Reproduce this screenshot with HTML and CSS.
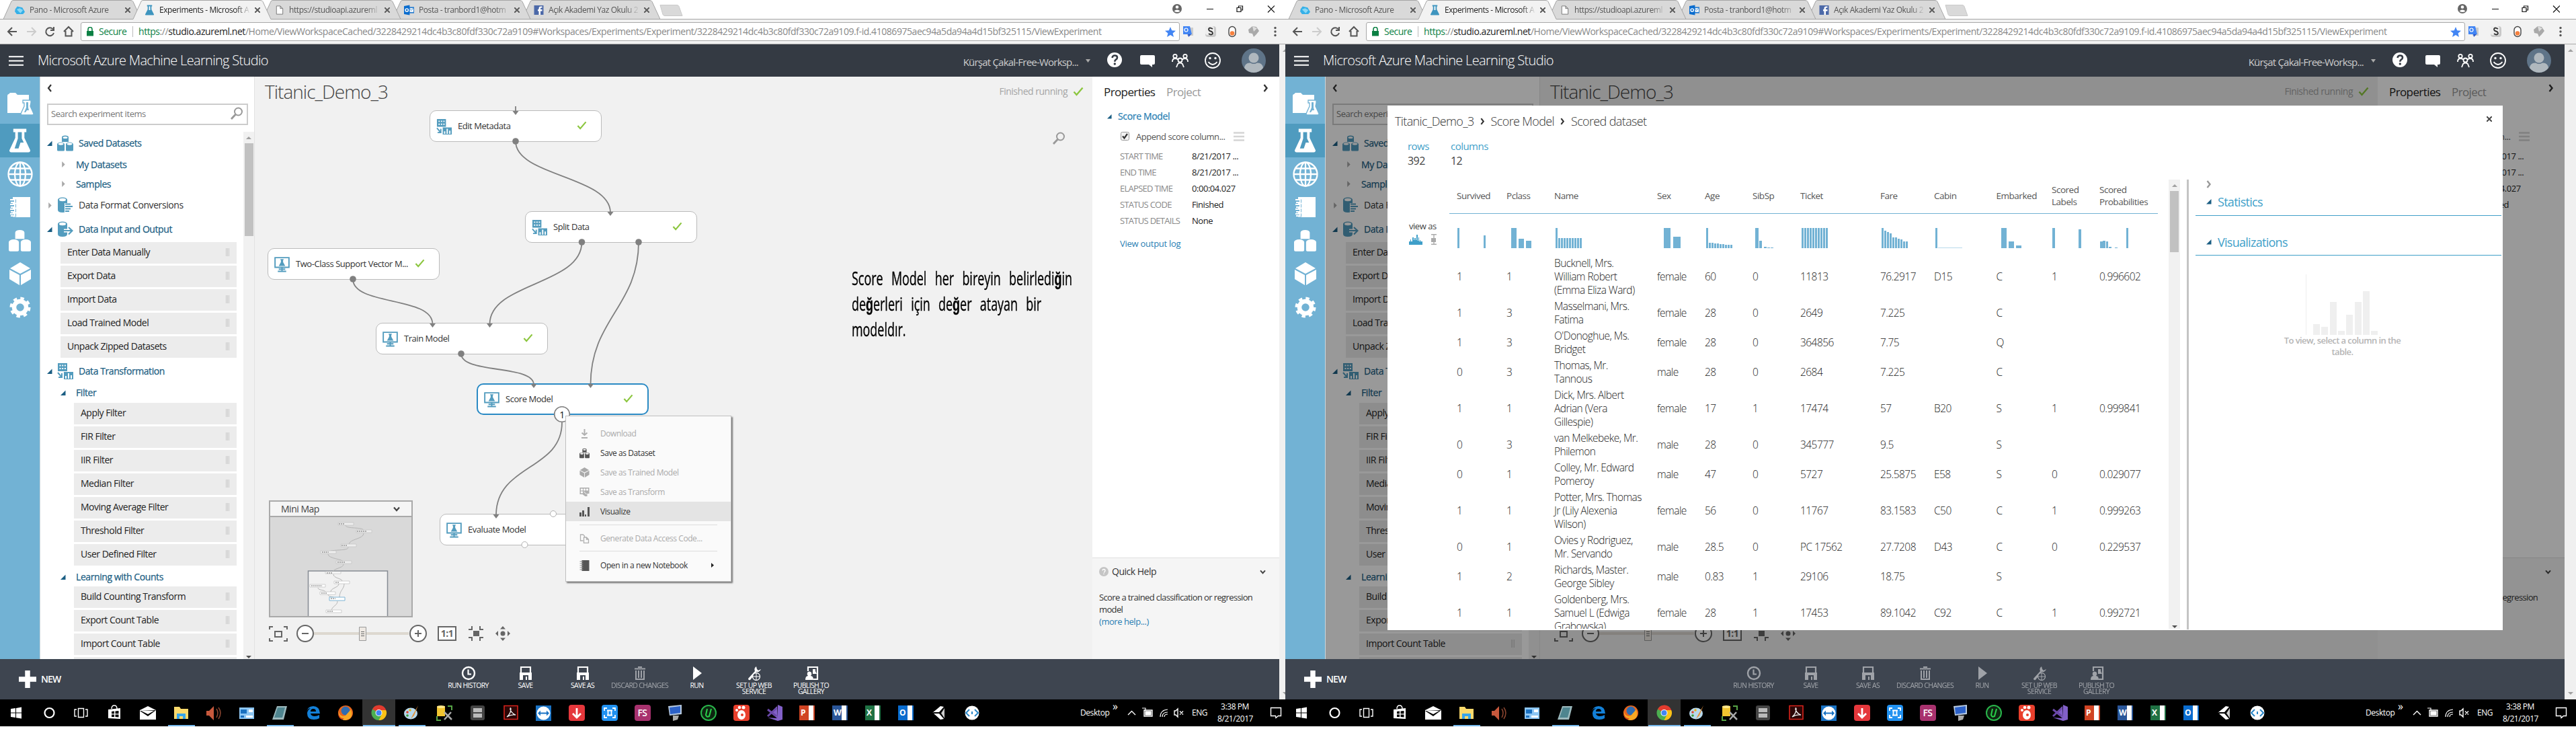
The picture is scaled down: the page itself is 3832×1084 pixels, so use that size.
FILE: index.html
```html
<!DOCTYPE html>
<html lang="en">
<head>
<meta charset="utf-8">
<title>Experiments - Microsoft Azure Machine Learning Studio</title>
<link rel="stylesheet" href="styles.css">
</head>
<body>
<svg class="defs" width="0" height="0">
  <symbol id="check" viewBox="0 0 16 14"><path d="M1.5 7.5 5.5 12 14.5 1.5" fill="none" stroke="#8cc63f" stroke-width="2.4"/></symbol>
  <symbol id="open" viewBox="0 0 8 8"><path d="M7.5 0V7.5H0z" fill="#1b5e83"/></symbol>
  <symbol id="closed" viewBox="0 0 8 10"><path d="M2 0 7 5 2 10z" fill="#a9a9a9"/></symbol>
  <symbol id="data" viewBox="0 0 24 24"><path d="M7 3a5 2.6 0 0 1 10 0v7H7zM0 13.500a5.200 2.800 0 0 1 11 0V22q0 1.500-1.500 1.500h-8Q0 23.500 0 22zM13 13.500a5.200 2.800 0 0 1 11 0V22q0 1.500-1.500 1.500h-8Q13 23.500 13 22z" fill="currentColor"/><g fill="#fff"><ellipse cx="12" cy="3.500" rx="3.500" ry="1.600"/><ellipse cx="5.500" cy="13" rx="3.800" ry="1.700"/><ellipse cx="18.500" cy="13" rx="3.800" ry="1.700"/></g></symbol>
  <symbol id="cylA" viewBox="0 0 24 24"><path d="M1 4a7 3.500 0 0 1 14 0v15q0 4-7 4t-7-4z" fill="#539cbe"/><ellipse cx="8" cy="4" rx="5" ry="2.200" fill="#fff"/><path d="M11 9h12v14H11z" fill="#fff"/><path d="M12 10.500h8M12 14h11M12 17.500h8M12 21h6" stroke="#539cbe" stroke-width="2"/></symbol>
  <symbol id="cylB" viewBox="0 0 24 24"><path d="M1 4a7 3.500 0 0 1 14 0v15q0 4-7 4t-7-4z" fill="#539cbe"/><ellipse cx="8" cy="4" rx="5" ry="2.200" fill="#fff"/><path d="M10 14h12M17 9l5.500 5L17 19.500" stroke="#fff" stroke-width="5" fill="none"/><path d="M10 14h12M17 9l5.500 5L17 19.500" stroke="#539cbe" stroke-width="2.200" fill="none"/></symbol>
  <symbol id="xform" viewBox="0 0 24 24"><path d="M1 0h14v12H1zM10 13h14v11H10z" fill="#539cbe"/><path d="M3.500 2.500h2v2h-2zm3.700 0h2v2h-2zm3.700 0h2v2h-2zM3.500 7h2v2h-2zm3.700 0h2v2h-2zm3.700 0h2v2h-2zM12 19h2v4h-2zm4-4h2v8h-2zm4 3h2v5h-2z" fill="#fff"/><path d="M1 14l6 7M7 15v6H2" stroke="#539cbe" stroke-width="2" fill="none"/></symbol>
  <symbol id="model" viewBox="0 0 24 24"><path d="M1.200 1.200h21.600v15H1.200zM12 16v6M5.500 22.500h13M7 19h10" fill="#fff" stroke="#539cbe" stroke-width="2"/><path d="M9.500 3.500h5v1.200h-.8v3.500l3.300 6H7l3.300-6V4.700h-.8z" fill="#539cbe"/></symbol>
  <symbol id="mag" viewBox="0 0 20 20"><circle cx="12.500" cy="7" r="5.500" fill="none" stroke="#999" stroke-width="2"/><path d="M8.500 11 2 18" stroke="#999" stroke-width="2.800"/></symbol>
  <symbol id="flask" viewBox="0 0 34 36"><path d="M7 0h20v5h-3v9l9 19q0 3-3 3H4q-3 0-3-3l9-19V5H7z" fill="#fff"/><path d="M14 5h6v10l3 6h-5l-3 9H9l5-15z" fill="#4f9bbf"/></symbol>
  <symbol id="cube" viewBox="0 0 32 34"><path d="M16 0 31 9 16 17 1 9zM0 11l15 8v15L0 25zM32 11l-15 8v15l15-9z" fill="currentColor"/></symbol>
  <symbol id="down" viewBox="0 0 10 8"><path d="M1 1.500 5 6l4-4.500" fill="none" stroke="#444" stroke-width="2.200"/></symbol>
  <symbol id="next" viewBox="0 0 8 12"><path d="M1.500 1 5.500 6l-4 5" fill="none" stroke="currentColor" stroke-width="2.400"/></symbol>
</svg>

<main class="pair" id="pair"></main>

<template id="screen">
<section class="screen">
  <div class="tabs">
    <svg class="tabshape" width="1030" height="29" viewBox="0 0 1030 29">
      <g fill="#d9d9d9" stroke="#a5a5a5">
        <path d="M777 28.500 789 2q1-1.500 3-1.500H966q3 0 4 2L982 28.500z"/><path d="M584 28.500 596 2q1-1.500 3-1.500H773q3 0 4 2L789 28.500z"/><path d="M391 28.500 403 2q1-1.500 3-1.500H580q3 0 4 2L596 28.500z"/><path d="M5 28.500 17 2q1-1.500 3-1.500H194q3 0 4 2L210 28.500z"/>
        <path d="M982 7.500h25q2 0 3 2l5 14h-26q-2 0-3-2z" stroke="#c9c9c9"/>
      </g>
      <path d="M0 28.500H198L210 2q1-1.500 3-1.500H387q3 0 4 2L403 28.500H1030V30H0z" fill="#f2f2f2" stroke="#a5a5a5"/>
    </svg>
    <div class="tab"><svg width="16" height="14" viewBox="0 0 16 14"><path d="M4 1l8 2 4 7-3 3.500H3L0 9l1-4z" fill="#35b0e8"/><path d="M3 6l5-2 5 3-4 5z" fill="#8ad8f5"/></svg><span>Pano - Microsoft Azure</span><b></b></div>
    <div class="tab on"><svg width="16" height="16" viewBox="0 0 16 16"><path d="M4 0h8v2h-1v5l4 8q0 1-1 1H2q-1 0-1-1l4-8V2H4z" fill="#3f95bf"/><path d="M7 2h2v6H7z" fill="#fff"/></svg><span>Experiments - Microsoft A</span><b></b></div>
    <div class="tab"><svg width="16" height="16" viewBox="0 0 16 16"><path d="M3.500 1.500h6l4 4v9h-10zM9.500 1.500v4h4" fill="#fff" stroke="#777"/></svg><span>https://studioapi.azureml</span><b></b></div>
    <div class="tab"><svg width="16" height="16" viewBox="0 0 16 16"><path d="M7 3h9v10H7z" fill="#2b7fd0"/><path d="M8 5h7v6H8z" fill="#fff"/><path d="M8 5l3.500 3.500L15 5" stroke="#2b7fd0" fill="none"/><path d="M0 1.500 9 0v16L0 14.500z" fill="#0a6cce"/><circle cx="4.500" cy="8" r="2.300" stroke="#fff" stroke-width="1.500" fill="none"/></svg><span>Posta - tranbord1@hotm</span><b></b></div>
    <div class="tab"><svg width="14" height="14" viewBox="0 0 14 14"><path d="M0 0h14v14H0z" fill="#4c69a8"/><path d="M9.500 14V8.500H12V6H9.500V4.500Q9.500 3.500 11 3.500h1V1.500h-2Q7 1.500 7 4.500V6H5.500v2.500H7V14z" fill="#fff"/></svg><span>Açık Akademi Yaz Okulu 2</span><b></b></div>
    <svg class="winctl" width="170" height="28" viewBox="0 0 170 28"><circle cx="25" cy="13" r="7" fill="#666"/><circle cx="25" cy="10.500" r="2.300" fill="#fff"/><path d="M20.500 16.500q4.500-4 9 0-4 3-9 0" fill="#fff"/><g fill="none" stroke="#111" stroke-width="1.200"><path d="M69 13.500h10M114 11.500h6v6h-6zM116.500 11V9h6v6H120M160 8.500l10 10M170 8.500l-10 10"/></g></svg>
  </div>
  <div class="toolbar">
    <svg class="nav" width="120" height="36" viewBox="0 0 120 36" fill="none" stroke="#555" stroke-width="2"><path d="M25 18H12M18 12l-6 6 6 6"/><path d="M40 18h13M47 12l6 6-6 6" stroke="#ccc"/><path d="M79 14.500A6 6 0 1 0 80 20M80 11v5h-5"/><path d="M95 18l7-7 7 7M97.500 17v7.500h9V17"/></svg>
    <div class="address">
      <svg width="12" height="14" viewBox="0 0 12 14"><path d="M1 6h10v7.500H1z" fill="#0b8043"/><path d="M3 6V3.500a3 3 0 0 1 6 0V6" fill="none" stroke="#0b8043" stroke-width="1.600"/></svg>
      <span class="secure">Secure</span>
      <span class="url"><i>https</i>://<em>studio.azureml.net</em>/Home/ViewWorkspaceCached/3228429214dc4b3c80fdf330c72a9109#Workspaces/Experiments/Experiment/3228429214dc4b3c80fdf330c72a9109.f-id.41086975aec94a5da94a4d15bf325115/ViewExperiment</span>
      <svg width="16" height="15" viewBox="0 0 16 15"><path d="M8 0l2.200 5.300 5.800.4-4.400 3.700L13 15 8 12l-5 3 1.400-5.600L0 5.700l5.800-.4z" fill="#4285f4"/></svg>
    </div>
    <svg class="exts" width="150" height="36" viewBox="0 0 150 36"><path d="M11 12h9v12h-9z" fill="#ccc"/><path d="M5 10h10l3 12H5z" fill="#4285f4"/><path d="M12 22h5l-4 4z" fill="#2a56c6"/><circle cx="9.500" cy="15.500" r="2.500" stroke="#fff" fill="none" stroke-width="1.200"/><rect x="38" y="10" width="16" height="16" rx="4" fill="#c9c9c9"/><rect x="38" y="10" width="13" height="13" rx="3" fill="#eee"/><path d="M49 14q-5-3-6 0 0 3 3 3.500t3 3.500q-2 3-6 0" stroke="#333" stroke-width="1.800" fill="none"/><rect x="73" y="10.500" width="10" height="15" rx="5" fill="#fff" stroke="#444" stroke-width="1.400"/><circle cx="78" cy="20.500" r="3.300" fill="#f5803e"/><path d="M102 15l6-5 6 1 4 6-4 5-4 4-2-5-5-1z" fill="#a9a9a9"/><path d="M108 10l2 8 5-5z" fill="#ddd"/><g fill="#555"><circle cx="142" cy="12.500" r="1.700"/><circle cx="142" cy="18" r="1.700"/><circle cx="142" cy="23.500" r="1.700"/></g></svg>
  </div>
  <div class="page">
    <div class="app">
      <header class="top">
        <svg class="burger" width="22" height="15" viewBox="0 0 22 15"><path d="M0 1.200h22M0 7.500h22M0 13.800h22" stroke="#fff" stroke-width="2"/></svg>
        <h1>Microsoft Azure Machine Learning Studio</h1>
        <span class="ws">Kürşat Çakal-Free-Worksp...</span>
        <svg class="caret" width="7" height="5"><path d="M0 0h7L3.500 5z" fill="#aaa"/></svg>
        <svg width="49" height="48" viewBox="0 0 49 48"><circle cx="24" cy="23" r="11" fill="#fff"/><path d="M20.500 20q.5-3.500 3.800-3.500 3.700 0 3.700 3 0 2-2 3.200-1.700 1-1.700 3" fill="none" stroke="#343a43" stroke-width="2.600"/><circle cx="24.300" cy="29" r="1.700" fill="#343a43"/></svg>
        <svg width="48" height="48" viewBox="0 0 48 48"><path d="M15 16h18q2 0 2 2v10q0 2-2 2h-2v4l-5-4H15q-2 0-2-2V18q0-2 2-2z" fill="#fff"/></svg>
        <svg width="49" height="48" viewBox="0 0 49 48" fill="none" stroke="#fff" stroke-width="1.800"><circle cx="17" cy="17.500" r="2.700"/><circle cx="32" cy="17.500" r="2.700"/><circle cx="24.500" cy="23.500" r="3"/><path d="M13 26q0-5 4-5t4 2M36 26q0-5-4-5t-4 2M19 34l2-5q3.500-3 7 0l2 5"/></svg>
        <svg width="48" height="48" viewBox="0 0 48 48" fill="none" stroke="#fff" stroke-width="1.800"><circle cx="24" cy="24" r="11"/><path d="M17.500 26q6.500 8 13 0"/><g fill="#fff" stroke="none"><circle cx="20" cy="20.500" r="1.700"/><circle cx="28" cy="20.500" r="1.700"/></g></svg>
        <svg width="75" height="48" viewBox="0 0 75 48"><circle cx="37" cy="24" r="18" fill="#5f7488"/><circle cx="37" cy="20" r="7.500" fill="#b0b8be"/><path d="M23 35q1-8 9-7.500 5 3 10 0 8-.5 9 7.500-5.500 7-14 7t-14-7" fill="#b0b8be"/></svg>
      </header>
      <div class="work">
        <nav class="rail">
          <svg class="r1" width="60" height="70" viewBox="0 0 60 70"><path d="M11 29q0-3 2-3l2-2h8l3 3h17v27H11z" fill="#fff"/><path d="M34 35h12v4l-1 5 5 11q0 2-2 2H33q-2 0-2-2l5-11v-5h-2z" fill="#fff" stroke="#72b2d4" stroke-width="1.300"/><path d="M39 38h3v8l1 4h-3l-2 3h-2l3-7z" fill="#72b2d4"/></svg>
          <span class="slot sel"><svg width="33" height="36"><use href="#flask"/></svg></span>
          <span class="slot"><svg width="40" height="40" viewBox="0 0 40 40" fill="none" stroke="#fff" stroke-width="2.300"><circle cx="20" cy="20" r="17.500"/><ellipse cx="20" cy="20" rx="8" ry="17.500"/><path d="M20 2v36M2 20h36M5 11.500h30M5 28.500h30"/></svg></span>
          <span class="slot"><svg width="32" height="32" viewBox="0 0 32 32"><path d="M5 1h26v30H5z" fill="#fff"/><g fill="none" stroke="#72b2d4" stroke-width="5"><path d="M0 7h10M0 14h10M0 21h10M0 28h10"/></g><g fill="none" stroke="#fff" stroke-width="2"><path d="M1 5h7v4H2M1 12h7v4H2M1 19h7v4H2M1 26h7v3H2"/></g></svg></span>
          <span class="slot ds"><svg width="33" height="36"><use href="#data"/></svg></span>
          <span class="slot"><svg width="32" height="34"><use href="#cube"/></svg></span>
          <span class="slot"><svg width="32" height="32" viewBox="0 0 32 32"><circle cx="16" cy="16" r="9" fill="none" stroke="#fff" stroke-width="6.500"/><circle cx="16" cy="16" r="13" fill="none" stroke="#fff" stroke-width="5" stroke-dasharray="5.200 5"/></svg></span>
        </nav>
        <aside class="palette">
          <svg class="back" width="8" height="12" viewBox="0 0 8 12"><path d="M6 1 2 6l4 5" fill="none" stroke="#333" stroke-width="2.200"/></svg>
          <div class="search"><span>Search experiment items</span><svg width="20" height="20"><use href="#mag"/></svg></div>
          <div class="treewrap">
            <div class="tree">
              <div class="g h34"><svg class="t"><use href="#open"/></svg><svg class="i"><use href="#data"/></svg>Saved Datasets</div>
              <div class="g s h29"><svg class="t"><use href="#closed"/></svg>My Datasets</div>
              <div class="g s h29"><svg class="t"><use href="#closed"/></svg>Samples</div>
              <div class="g n h34"><svg class="t"><use href="#closed"/></svg><svg class="i"><use href="#cylA"/></svg>Data Format Conversions</div>
              <div class="g h38"><svg class="t"><use href="#open"/></svg><svg class="i"><use href="#cylB"/></svg>Data Input and Output</div>
              <div class="it">Enter Data Manually</div><div class="it">Export Data</div><div class="it">Import Data</div><div class="it">Load Trained Model</div><div class="it">Unpack Zipped Datasets</div>
              <div class="g h34"><svg class="t"><use href="#open"/></svg><svg class="i"><use href="#xform"/></svg>Data Transformation</div>
              <div class="g s h30"><svg class="t"><use href="#open"/></svg>Filter</div>
              <div class="it d">Apply Filter</div><div class="it d">FIR Filter</div><div class="it d">IIR Filter</div><div class="it d">Median Filter</div><div class="it d">Moving Average Filter</div><div class="it d">Threshold Filter</div><div class="it d">User Defined Filter</div>
              <div class="g s h28"><svg class="t"><use href="#open"/></svg>Learning with Counts</div>
              <div class="it d">Build Counting Transform</div><div class="it d">Export Count Table</div><div class="it d">Import Count Table</div><div class="it d"></div>
            </div>
            <div class="vbar"><i class="up"></i><u></u><i class="dn"></i></div>
          </div>
        </aside>
        <div class="canvas">
          <div class="chead"><h2>Titanic_Demo_3</h2><span>Finished running</span><svg width="16" height="14"><use href="#check"/></svg></div>
          <svg class="find" width="20" height="20"><use href="#mag"/></svg>
          <div class="node" style="left:260px;top:50px"><svg class="ni"><use href="#xform"/></svg><span>Edit Metadata</span><svg class="ok"><use href="#check"/></svg></div>
          <div class="node" style="left:402px;top:200px"><svg class="ni"><use href="#xform"/></svg><span>Split Data</span><svg class="ok"><use href="#check"/></svg></div>
          <div class="node" style="left:19px;top:255px"><svg class="ni"><use href="#model"/></svg><span>Two-Class Support Vector M...</span><svg class="ok"><use href="#check"/></svg></div>
          <div class="node" style="left:180px;top:366px"><svg class="ni"><use href="#model"/></svg><span>Train Model</span><svg class="ok"><use href="#check"/></svg></div>
          <div class="node cur" style="left:330px;top:456px"><svg class="ni"><use href="#model"/></svg><span>Score Model</span><svg class="ok"><use href="#check"/></svg></div>
          <div class="node" style="left:275px;top:650px"><svg class="ni"><use href="#model"/></svg><span>Evaluate Model</span></div>
          <svg class="wires" width="720" height="720" viewBox="379 114 720 720">
            <g fill="none" stroke="#808080" stroke-width="1.800"><path d="M767 158v8M767 210C767 262 908 262 908 316M865.500 360C865.500 424 728.500 420 728.500 482M950 360C950 455 878.500 475 878.500 572M525 415C525 455 643.500 440 643.500 482M686 526C686 556 794 542 794 572M836 628C836 700 738 690 738 766"/></g>
            <g fill="#808080"><path d="M762.500 165h9l-4.500 6zM903.500 315h9l-4.500 6zM724 481h9l-4.500 6zM639 481h9l-4.500 6zM874 571h9l-4.500 6zM789.500 571h9l-4.500 6zM733.500 765h9l-4.500 6z"/><circle cx="767" cy="210" r="4.800"/><circle cx="865.500" cy="360" r="4.800"/><circle cx="950" cy="360" r="4.800"/><circle cx="525" cy="415" r="4.800"/><circle cx="686" cy="526" r="4.800"/></g>
            <g fill="#fff" stroke="#b0b0b0"><circle cx="823" cy="764" r="4.500"/><circle cx="780.500" cy="810" r="4.500"/></g>
            <circle cx="836" cy="616" r="11.300" fill="#fff" stroke="#808080" stroke-width="1.600"/>
          </svg>
          <span class="badge">1</span>
          <div class="ctx">
            <div class="off"><svg width="14" height="14" viewBox="0 0 14 14" fill="none" stroke="#b0b0b0" stroke-width="2"><path d="M7 0v9M3 5.500 7 9l4-3.500M2.500 13h9"/></svg>Download</div>
            <div><svg width="15" height="16"><use href="#data"/></svg>Save as Dataset</div>
            <div class="off"><svg width="15" height="15"><use href="#cube"/></svg>Save as Trained Model</div>
            <div class="off"><svg width="14" height="14" viewBox="0 0 14 14"><path d="M0 0h14v9h-3v4H8L4 10H0z" fill="#b0b0b0"/><path d="M2 2h2v2H2zm4 0h2v2H6zm4 0h2v2h-2zM2 6h2v2H2zm4 0 4 4" fill="#fff" stroke="#fff"/></svg>Save as Transform</div>
            <div class="hot"><svg width="15" height="14" viewBox="0 0 15 14"><path d="M0 8h3v6H0zM4 5h3v9H4zM8 11h2v3H8zM12 0h3v14h-3z" fill="#555"/></svg>Visualize</div>
            <hr>
            <div class="off"><svg width="14" height="14" viewBox="0 0 14 14" fill="none" stroke="#b0b0b0" stroke-width="1.300"><path d="M5 10H1V1h4l2 2v2M6 5h4l3 3v5.500H6zM10 5v3h3"/></svg>Generate Data Access Code...</div>
            <hr>
            <div><svg width="14" height="16" viewBox="0 0 14 16"><path d="M3 0h11v16H3z" fill="#555"/><path d="M0 2h5M0 5h5M0 8h5M0 11h5M0 14h5" stroke="#888"/></svg>Open in a new Notebook<svg class="sub" width="4" height="7"><path d="M0 0 4 3.500 0 7z" fill="#222"/></svg></div>
          </div>
          <p class="note">Score Model her bireyin belirledi<b>ğ</b>in<br>de<b>ğ</b>erleri için de<b>ğ</b>er atayan bir<br>modeldır.</p>
          <div class="mini">
            <div class="mh"><span>Mini Map</span><svg width="10" height="8"><use href="#down"/></svg></div>
            <svg width="212" height="148" viewBox="402 768 212 148"><path d="M458.500 916V848h118v68" fill="#f1f1f1" stroke="#868c94" stroke-width="1.500"/><g fill="none" stroke="#b5b5b5"><path d="M514 780c0 6 27 2 27 8M541 792c0 9-22 8-22 17M518 813c0 6-30 2-30 8M488 823c0 7 23 7 23 12M511 838c0 6-16 6-16 12M496 853c0 6 13 6 13 10M504 867c0 6-12 6-12 12M512 867c0 8-7 10-7 20M473 873c0 4 11 3 11 6M488 883c0 4 9 3 9 5M502 893c0 7-9 7-9 15"/></g><g fill="#eee" stroke="#c5c5c5" stroke-width=".8"><path d="M503 776h23v4h-23zM530 787h23v4h-23zM507 808h23v4h-23zM477 818h23v4h-23zM500 833h23v4h-23z"/><path d="M484 849h23v3h-23zM497 863h23v4h-23zM461 868h23v4h-23zM476 879h23v4h-23zM485 906h23v4h-23z" fill="#fff"/></g><path d="M490 887h23v5h-23z" fill="#fff" stroke="#7fb4d4"/><path d="M504 778h9M531 789h14M508 810h8M479 820h10M502 835h12M486 851h8M499 865h6M463 870h16M478 881h8M492 889h7M487 908h9" stroke="#666" stroke-dasharray="2 1"/></svg>
          </div>
          <svg class="zoom" width="365" height="28" viewBox="398 928 365 28" fill="none" stroke="#666" stroke-width="2">
            <path d="M401 936v-4h5M422 932h5v4M427 949v4h-5M406 953h-5v-4M409 939h10v8h-10z"/><path d="M467 942h141" stroke="#ddd8d0" stroke-width="4"/><circle cx="454" cy="942" r="12" fill="#fff"/><path d="M449 942h10"/><path d="M534.500 932.500h10v20h-10z" fill="#eee9e3" stroke="#999" stroke-width="1"/><path d="M537 939.500h5M537 942.500h5M537 945.500h5" stroke-width="1"/><circle cx="622" cy="942" r="12" fill="#fff"/><path d="M617 942h10M622 937v10"/><path d="M652 932h26v20h-26z" fill="#fff"/><path d="M697 936h5v-5M714 931v5h5M719 948h-5v5M702 953v-5h-5"/><path d="M704 938h9v8h-9z" fill="#666" stroke="none"/><path d="M748 931l4 4.500h-8zM748 953l4-4.500h-8zM737 942l4-4v8zM759 942l-4-4v8z" fill="#666" stroke="none"/><circle cx="748" cy="942" r="3.500" fill="#666" stroke="none"/>
          </svg>
          <span class="one">1:1</span>
        </div>
        <aside class="props">
          <div class="ph"><b>Properties</b><span>Project</span><svg width="8" height="12"><use href="#next"/></svg></div>
          <div class="pt"><svg width="7" height="7"><use href="#open"/></svg>Score Model</div>
          <div class="pc"><svg width="13" height="13" viewBox="0 0 13 13"><rect x=".5" y=".5" width="12" height="12" rx="2" fill="#f2f2f2" stroke="#999"/><path d="M3 6.500 5.500 9.500 10 3" fill="none" stroke="#333" stroke-width="2.200"/></svg><span>Append score column...</span><svg width="16" height="14" viewBox="0 0 16 14"><path d="M0 1.500h16M0 7h16M0 12.500h16" stroke="#d5d5d5" stroke-width="2.600"/></svg></div>
          <dl><dt>START TIME</dt><dd>8/21/2017 ...</dd><dt>END TIME</dt><dd>8/21/2017 ...</dd><dt>ELAPSED TIME</dt><dd>0:00:04.027</dd><dt>STATUS CODE</dt><dd>Finished</dd><dt>STATUS DETAILS</dt><dd>None</dd></dl>
          <a class="log">View output log</a>
          <div class="qh">
            <div class="qt"><svg width="14" height="14" viewBox="0 0 14 14"><circle cx="7" cy="7" r="7" fill="#c5c5c5"/><path d="M5 5.300Q5.200 3.500 7 3.500q2 0 2 1.800T7 8.500M7 9.800V11" fill="none" stroke="#fff" stroke-width="1.400"/></svg><span>Quick Help</span><svg width="9" height="7"><use href="#down"/></svg></div>
            <p>Score a trained classification or regression<br>model<br><a>(more help...)</a></p>
          </div>
        </aside>
      </div>
      <footer class="cmd">
        <svg class="plus" width="26" height="26" viewBox="0 0 26 26"><path d="M13 0v26M0 13h26" stroke="#fff" stroke-width="7.500"/></svg><strong>NEW</strong>
        <div class="acts">
          <div><svg viewBox="0 0 22 22"><circle cx="11" cy="11" r="9" fill="none" stroke="#fff" stroke-width="2.400"/><path d="M10.500 5.500v7H15" fill="none" stroke="#fff" stroke-width="2.200"/></svg>RUN HISTORY</div>
          <div><svg viewBox="0 0 22 22"><path d="M4 2h14v9H4z" fill="none" stroke="#fff" stroke-width="2.200"/><path d="M2 10h18v11H2z" fill="#fff"/><path d="M7 14h8v7H7z" fill="#3e4550"/><path d="M11 16h2v5h-2z" fill="#fff"/></svg>SAVE</div>
          <div><svg viewBox="0 0 22 22"><path d="M4 2h14v9H4z" fill="none" stroke="#fff" stroke-width="2.200"/><path d="M2 10h18v11H2z" fill="#fff"/><path d="M7 14h8v7H7z" fill="#3e4550"/><path d="M11 16h2v5h-2z" fill="#fff"/></svg>SAVE AS</div>
          <div class="dim"><svg viewBox="0 0 22 22" fill="none" stroke="#fff" stroke-width="2"><path d="M3 4.500h16M8 2h6M5 7v13h12V7M9 7v11M13 7v11"/></svg>DISCARD CHANGES</div>
          <div><svg viewBox="0 0 22 22"><path d="M5 1 18 11 5 21z" fill="#fff"/></svg>RUN</div>
          <div class="two"><svg viewBox="0 0 22 22"><path d="M14 1q-4 3-2 7L2 19q0 3 3 2L14 9q5 1 7-4l-4 2-2-2z" fill="#fff"/><circle cx="14" cy="16" r="5.500" fill="#3e4550" stroke="#fff" stroke-width="1.300"/><path d="M9 16h10M14 11v10" stroke="#fff"/></svg>SET UP WEB<br>SERVICE</div>
          <div class="two"><svg viewBox="0 0 22 22"><path d="M6 8V2h14v18h-6" fill="none" stroke="#fff" stroke-width="2.200"/><path d="M13 5h4v3l2 4h-6zM2 21q0-6 4-6-2-2-1-5 3-3 6 0 1 3-1 5 4 0 4 6z" fill="#fff"/></svg>PUBLISH TO<br>GALLERY</div>
        </div>
      </footer>
    </div>
    <div class="pagebar"><i class="up"></i><i class="dn"></i></div>
  </div>
  <div class="task">
    <div class="apps">
      <svg viewBox="0 0 49 40"><path d="M16 14l7-1v6.500h-7zM24 12.900l8-1.400v8h-8zM16 20.500h7V27l-7-1zM24 20.500h8v8L24 27.200z" fill="#fff"/></svg>
      <svg viewBox="0 0 49 40"><circle cx="24.500" cy="20" r="7" fill="none" stroke="#fff" stroke-width="2.200"/></svg>
      <svg viewBox="0 0 49 40" fill="none" stroke="#fff" stroke-width="1.400"><path d="M18.500 13.500h8v13h-8zM16 15h-3v10h3M29 15h3v10h-3"/></svg>
      <svg viewBox="0 0 49 40"><path d="M14 15l18-2v16l-18-1z" fill="#fff"/><path d="M19 14q0-5 4-5t4 5" fill="none" stroke="#fff" stroke-width="1.400"/><path d="M19 18l4-.4v3.600h-4zM24.500 17.400l5-.4v4.200h-5zM19 22.500h4V26h-4zM24.500 22.500h5v4l-5-.4z" fill="#000"/></svg>
      <svg viewBox="0 0 49 40"><path d="M12 16l12-6 12 6v14H12z" fill="#fff"/><path d="M12 17l24-1-12 9z" fill="#000"/><path d="M14 17h19l-9 5z" fill="#fff"/></svg>
      <svg class="run" viewBox="0 0 49 40"><path d="M14 11h8l2 3h11v15H14z" fill="#fbd96b"/><path d="M18 21h13v8h-4v-4h-5v4h-4z" fill="#38a5e8"/></svg>
      <svg viewBox="0 0 49 40"><path d="M13 17h4l7-7v21l-7-7h-4z" fill="#c8593d"/><path d="M28 14q4 6 0 13M31 12q6 8 0 17" fill="none" stroke="#8b4530" stroke-width="1.500"/></svg>
      <svg viewBox="0 0 49 40"><path d="M13 12h22v17H13z" fill="#8dc6f3"/><path d="M15 15h9v6h-9zM15 24h5v3h-5z" fill="#1a70c0"/><path d="M27 15h6v4h-6zM23 24h10v3H23z" fill="#fff"/></svg>
      <svg class="run" viewBox="0 0 49 40"><path d="M20 10h15l-5 20H13z" fill="#9db9bd"/><path d="M21 12h11l-4 15H16z" fill="#4f858f"/></svg>
      <svg viewBox="0 0 49 40"><path d="M15 20q1-10 10-10t10 11H21q1 4 6 4 4 0 7-2v5q-3 2-8 2-10 0-10-9 0-5 5-8-6 1-6 7zm6-2h8q0-4-4-4t-4 4" fill="#1380d8" fill-rule="evenodd"/></svg>
      <svg viewBox="0 0 49 40"><circle cx="24" cy="20" r="11" fill="#e8651c"/><circle cx="24" cy="17" r="6.500" fill="#2f6cb0"/><path d="M13 17q3 10 11 7l8-9q5 14-8 16-9 0-11-14" fill="#f7a823"/><path d="M13 20q2 9 9 8l-3 2q-6-2-6-10" fill="#d5421a"/></svg>
      <svg class="run cur" viewBox="0 0 49 40"><circle cx="24.500" cy="20" r="11" fill="#4caf50"/><path d="M24.500 20 15 14.500A11 11 0 0 1 35.300 16H24.500z" fill="#e33b2e"/><path d="M24.500 31A11 11 0 0 0 35.300 16H25l4 6z" fill="#fbc116"/><circle cx="24.500" cy="20" r="5" fill="#fff"/><circle cx="24.500" cy="20" r="4" fill="#4285f4"/></svg>
      <svg class="run" viewBox="0 0 49 40"><ellipse cx="23" cy="21" rx="10" ry="8.500" fill="#b7d8ec"/><circle cx="18" cy="19" r="1.800" fill="#d43"/><circle cx="22" cy="16" r="1.800" fill="#e9b010"/><circle cx="18" cy="24" r="1.800" fill="#3b9c3a"/><path d="M34 9l-8 14-3 6 5-5z" fill="#e1913a"/></svg>
      <svg viewBox="0 0 49 40"><path d="M13 10h12v15H13z" fill="#f2c530"/><ellipse cx="19" cy="11" rx="6" ry="2" fill="#ffe88a"/><path d="M29 10h6v6M13 25v6h6" fill="none" stroke="#57a546" stroke-width="2"/><path d="M24 19l11 11M34 19 24 30" stroke="#aaa" stroke-width="2.500"/></svg>
      <svg viewBox="0 0 49 40"><rect x="14" y="9" width="21" height="22" rx="3" fill="#454545"/><path d="M18 13h13v6H18zM18 21h13v6H18z" fill="#bbb"/></svg>
      <svg viewBox="0 0 49 40"><path d="M15 9.500h20v20H15z" fill="#2b0606" stroke="#d8221b" stroke-width="1.600"/><path d="M19 26q6-5 6-12-1-3-1 1 2 6 8 8-7-1-13 3" fill="none" stroke="#eee" stroke-width="1.300"/></svg>
      <svg viewBox="0 0 49 40"><rect x="13" y="9" width="23" height="23" fill="#1a73c4"/><circle cx="24.500" cy="20.500" r="10" fill="#fff"/><path d="M16 20.500l4-4v3h9v-3l4 4-4 4v-3h-9v3z" fill="#1a73c4"/></svg>
      <svg viewBox="0 0 49 40"><rect x="13" y="8" width="24" height="24" rx="4" fill="#e5373c"/><path d="M25 13v13M19 21l6 6 6-6" fill="none" stroke="#fff" stroke-width="2.800"/></svg>
      <svg viewBox="0 0 49 40"><rect x="13" y="8" width="24" height="24" rx="4" fill="#2191f0"/><path d="M17 17v-4h4M29 13h4v4M33 23v4h-4M21 27h-4v-4M21 16.500h8M21 23.500h8M22.500 17v6M27.500 17v6" fill="none" stroke="#fff" stroke-width="1.800"/></svg>
      <span class="fs"><b>FS</b></span>
      <svg viewBox="0 0 49 40"><path d="M14 10l20-2v14l-18 2z" fill="#b9cbe0"/><path d="M16 12l16-2v10l-15 2z" fill="#2c61c8"/><path d="M21 24h9l-2 6-7 2z" fill="#aaa"/></svg>
      <svg viewBox="0 0 49 40"><circle cx="25" cy="20" r="11" fill="#0e2411" stroke="#29b54a" stroke-width="2"/><path d="M23 14l-2 9q1 4 5 2l3-11" fill="none" stroke="#29d04a" stroke-width="2"/></svg>
      <svg viewBox="0 0 49 40"><rect x="13" y="8" width="24" height="24" rx="4" fill="#e93f2c"/><ellipse cx="25" cy="23" rx="6" ry="7" fill="#fff"/><circle cx="18" cy="16" r="2" fill="#fff"/><circle cx="22" cy="12" r="2.300" fill="#fff"/><circle cx="28" cy="12" r="2.500" fill="#fff"/><circle cx="26" cy="23" r="2" fill="#e93f2c"/></svg>
      <svg viewBox="0 0 49 40"><path d="M30 8l7 3v19l-7 2-15-5 14 1V10L19 20l10 8" fill="#8260c8"/><path d="M15 15l13 10M15 25l13-12" stroke="#6a48a8" stroke-width="3"/></svg>
      <span class="off ppt"><b>P</b></span><span class="off wrd"><b>W</b></span><span class="off xls"><b>X</b></span><span class="off olk"><b>O</b></span>
      <svg viewBox="0 0 49 40"><path d="M15 20l12-10 5 1-7 8h-8zM17 21h8l7 8-5 1z" fill="#fff"/><path d="M33 13v15l-5-7.500z" fill="#ccc"/></svg>
      <svg viewBox="0 0 49 40"><circle cx="25" cy="20" r="10.500" fill="#fff"/><path d="M21 15l-5 5 5 5M29 15l5 5-5 5M25 18v4" fill="none" stroke="#2a87c8" stroke-width="2"/></svg>
    </div>
    <div class="tray">
      <span class="desk">Desktop</span><span class="more">»</span>
      <svg width="100" height="40" viewBox="1672 1040 100 40" fill="none" stroke="#fff" stroke-width="1.400"><path d="M1678 1063l5.500-5.500 5.500 5.500M1702 1056h12v9h-12z"/><path d="M1704 1058h8v5h-8z" fill="#fff"/><path d="M1699 1053h5v4M1726 1066q0-10 11-11M1729 1066q0-7 8-7M1732 1066q0-4 5-4" stroke-width="1.200"/><path d="M1747 1057h2l3-3v12l-3-3h-2zM1755 1057.500l5 5M1760 1057.500l-5 5"/></svg>
      <span class="lang">ENG</span><span class="clock">3:38 PM<br>8/21/2017</span>
      <svg width="18" height="18" viewBox="0 0 18 18"><path d="M1.500 1.500h15v12h-4l-3.500 3-.5-3h-7z" fill="none" stroke="#fff" stroke-width="1.400"/></svg>
    </div>
  </div>
</section>
</template>

<template id="dialog">
  <div class="shade"></div>
  <div class="dialog">
    <div class="crumb"><span>Titanic_Demo_3</span><svg width="7" height="11"><use href="#next"/></svg><span>Score Model</span><svg width="7" height="11"><use href="#next"/></svg><span>Scored dataset</span><i class="x"></i></div>
    <div class="dims"><div><b>rows</b>392</div><div><b>columns</b>12</div></div>
    <div class="split">
      <div class="gridwrap">
        <div class="viewas">view as<svg width="40" height="16" viewBox="0 0 40 16"><path d="M0 16v-4h2V8h1v4h2V5h2v4h1V6h2v3h1V1h2v9h1V5h1v7h1V9h1v7z" fill="#3f9fc9"/><path d="M0 11h20v5H0z" fill="#3f9fc9"/><path d="M33 .7h8M37 1v15M33 15.300h8" stroke="#aaa" stroke-width="1.400"/><path d="M33 6h7v6h-7z" fill="#aaa"/></svg></div>
        <div class="table" id="table"></div>
        <div class="vbar"><i class="up"></i><u></u><i class="dn"></i></div>
      </div>
      <div class="stats">
        <svg class="ex" width="8" height="12"><use href="#next"/></svg>
        <h3><svg width="8" height="8"><use href="#open"/></svg>Statistics</h3>
        <h3><svg width="8" height="8"><use href="#open"/></svg>Visualizations</h3>
        <svg class="ghost" width="108" height="90" viewBox="3430 409 108 90"><path d="M3430 409h1v90h-1zM3441 483h10v16h-10zM3453 487h10v12h-10zM3466 450h10v49h-10zM3478 493h10v6h-10zM3490 469h10v30h-10zM3503 450h10v49h-10zM3515 434h10v65h-10zM3527 493h10v6h-10z" fill="#efefef"/></svg>
        <p>To view, select a column in the<br>table.</p>
      </div>
    </div>
  </div>
</template>
<script src="main.js"></script>
</body>
</html>
```
FILE: styles.css
```css
* { box-sizing: border-box; letter-spacing: -0.035em; }
body { margin: 0; background: #fff; font: 14px/1 "Open Sans", "Noto Sans", sans-serif; color: #333; overflow: hidden; }
svg { flex: none; display: block; }
.defs { position: absolute; }
h1, h2, h3, p, dl, dd, dt { margin: 0; font-weight: 400; }
.pair { display: flex; width: 3832px; height: 1084px; }
.frame { width: 1912px; overflow: hidden; flex: none; }
.frame.wide { width: 1920px; }
.screen { width: 1920px; height: 1080px; display: flex; flex-direction: column; position: relative; }

/* browser chrome */
.tabs { height: 29px; display: flex; position: relative; padding-left: 22px; background: linear-gradient(#fff 28px, #a5a5a5 28px); }
.tabshape { position: absolute; left: 0; top: 0; }
.tab { width: 193px; flex: none; display: flex; align-items: center; position: relative; font-size: 12px; color: #555; }
.tab svg { width: 15px; }
.tab span { width: 136px; flex: none; margin-left: 7px; white-space: nowrap; overflow: hidden; line-height: 20px; letter-spacing: -0.035em; -webkit-mask-image: linear-gradient(90deg, #000 84%, transparent); }
.tab.on { color: #222; }
.tab b { width: 8px; height: 8px; margin-left: 6px; background: linear-gradient(45deg, transparent 42%, #666 42% 58%, transparent 58%), linear-gradient(-45deg, transparent 42%, #666 42% 58%, transparent 58%); }
.winctl { margin-left: auto; margin-right: 24px; }
.toolbar { height: 37px; background: #f2f2f2; border-bottom: 1px solid #a9a9a9; display: flex; align-items: center; }
.address { width: 1635px; height: 28px; background: #fff; border: 1px solid #a9a9a9; border-radius: 3px; display: flex; align-items: center; padding: 0 5px 0 7px; }
.secure { color: #0b8043; margin-left: 7px; width: 51px; line-height: 16px; border-right: 1px solid #bbb; font-size: 14px; }
.url { margin-left: 8px; flex: 1; color: #888; line-height: 20px; white-space: nowrap; font-size: 14px; letter-spacing: -0.0315em; }
.url i { font-style: normal; color: #0b8043; letter-spacing: inherit; }
.url em { font-style: normal; color: #222; letter-spacing: inherit; }

/* application frame */
.page { height: 974px; display: flex; }
.app { width: 1903px; display: flex; flex-direction: column; position: relative; }
.pagebar { width: 17px; background: #f0f0f0; display: flex; flex-direction: column; justify-content: space-between; align-items: center; padding: 7px 0; }
.up, .dn { border: 4px solid transparent; display: block; width: 0; height: 0; }
.up { border-top: 0; border-bottom-color: #a0a0a0; }
.dn { border-bottom: 0; border-top-color: #505050; }
.pagebar .dn { border-top-color: #a0a0a0; }
.top { height: 48px; background: #343a43; color: #fff; display: flex; align-items: center; }
.burger { margin: 0 21px 0 13px; }
.top h1 { font-size: 20px; line-height: 30px; font-weight: 300; flex: 1; letter-spacing: -0.034em; }
.ws { font-size: 15px; line-height: 20px; color: #ccc; margin-top: 4px; letter-spacing: -0.052em; }
.caret { margin: 0 12px 0 11px; }
.work { height: 866px; display: flex; }
.rail { width: 60px; background: #72b2d4; border-right: 1px solid #c9d5dc; color: #fff; }
.slot { display: flex; height: 49.5px; width: 59px; align-items: center; justify-content: center; }
.sel { background: #4f9bbf; height: 50px; }

/* module palette */
.palette { width: 319px; background: #fff; display: flex; flex-direction: column; border-right: 1px solid #e2e2e2; }
.back { margin: 11px 0 0 10px; }
.search { margin: 17px 9px 0 10px; height: 32px; flex: none; border: 2px solid #ccc; display: flex; align-items: center; justify-content: space-between; padding: 0 5px 2px 4px; color: #777; font-size: 13px; line-height: 20px; }
.treewrap { display: flex; height: 784px; margin-top: 10px; overflow: hidden; }
.tree { width: 302px; flex: none; }
.vbar { width: 17px; background: #f1f1f1; display: flex; flex-direction: column; align-items: center; padding: 7px 0 1px; }
.vbar u { width: 13px; height: 138px; background: #c1c1c1; margin: 6px 0 auto; }
.g { display: flex; align-items: center; color: #1b5e83; padding-left: 10px; -webkit-text-stroke: .25px; letter-spacing: -0.03em; }
.g.n { color: #333; -webkit-text-stroke: 0; }
.g .t { width: 8px; height: 9px; margin-right: 7px; }
.g .i { width: 24px; height: 24px; margin-right: 8px; color: #539cbe; }
.g.s { padding-left: 30px; }
.g.s .t { margin-right: 15px; }
.h28 { height: 28px; } .h29 { height: 29px; } .h30 { height: 30px; } .h34 { height: 34px; } .h38 { height: 38px; }
.it { height: 32px; margin: 0 10px 3px 30px; padding: 0 10px 2px; line-height: 30px; color: #222; background: linear-gradient(90deg, #c9c9c9 1px, transparent 1px 2px, #c9c9c9 2px 3px, transparent 3px 4px, #c9c9c9 4px 5px, transparent 5px) 246px 9px / 6px 12px no-repeat #ececec; }
.it.d { margin-left: 50px; background-position: 226px 9px; }

/* experiment canvas */
.canvas { width: 1246px; background: #f1f1f1; position: relative; overflow: hidden; }
.chead { display: flex; align-items: center; padding: 2px 13px 0 15px; height: 42px; gap: 8px; color: #a5a5a5; }
.chead h2 { font-size: 28px; line-height: 36px; font-weight: 300; color: #444; flex: 1; }
.find { position: absolute; left: 1186px; top: 82px; }
.node { position: absolute; width: 256px; height: 47px; background: #fff; border: 1.500px solid #bbb; border-radius: 10px; display: flex; align-items: center; padding: 0 21px 2px 9px; font-size: 13px; line-height: 18px; }
.node span { margin-left: 9px; flex: 1; white-space: nowrap; }
.ni { width: 23px; height: 23px; margin-top: 3px; }
.ok { width: 15px; height: 13px; }
.cur.node { border: 2px solid #2a8ac4; }
.wires { position: absolute; left: 0; top: 0; }
.badge { position: absolute; left: 448px; top: 494px; width: 18px; text-align: center; font-size: 14px; line-height: 17px; color: #111; }
.ctx { position: absolute; left: 462px; top: 504px; width: 247px; height: 247px; background: #fafafa; border: 1px solid #c0c0c0; box-shadow: 2px 2px 2px #777; padding-top: 11px; font-size: 12px; }
.ctx div { height: 29px; display: flex; align-items: center; padding-left: 20px; gap: 16px; color: #333; }
.ctx div > svg:first-child { width: 15px; color: #555; }
.ctx .off { color: #aaa; }
.ctx .off > svg:first-child { color: #aaa; }
.ctx .hot { background: #e4e4e4; }
.ctx hr { border: 0; height: 1px; background: #ddd; margin: 5px 20px 5px; }
.ctx hr + div + hr { margin: 4px 20px 6px; }
.ctx .sub { margin-left: 19px; }
.note { position: absolute; left: 888px; top: 280px; font: 28px/38px "Liberation Sans Narrow", "Open Sans", sans-serif; color: #000; white-space: nowrap; word-spacing: 12px; transform: scaleX(.64); transform-origin: 0 0; letter-spacing: 0; -webkit-text-stroke: .4px; }
.note b { letter-spacing: 0; font-family: "Liberation Sans", sans-serif; line-height: 1; }
.mini { position: absolute; left: 21px; top: 630px; width: 214px; height: 174px; border: 2px solid #a9a9a9; background: #d9d9d9; overflow: hidden; }
.mh { height: 23px; background: #f5f5f5; border-bottom: 2px solid #a9a9a9; display: flex; align-items: center; justify-content: space-between; padding: 0 17px 0 16px; font-size: 14px; color: #444; }
.zoom { position: absolute; left: 19px; top: 814px; }
.one { position: absolute; left: 276px; top: 819px; width: 20px; text-align: center; font: bold 14px/18px "Open Sans", sans-serif; color: #666; }

/* properties */
.props { width: 278px; background: #fff; display: flex; flex-direction: column; }
.ph { display: flex; font-size: 17px; line-height: 24px; padding: 11px 16px 0 17px; height: 48px; }
.ph b { font-weight: 400; color: #222; width: 93px; }
.ph span { color: #999; flex: 1; }
.pt { display: flex; align-items: center; gap: 9px; color: #2a7fb4; font-size: 14px; line-height: 22px; padding-left: 22px; -webkit-text-stroke: .25px; letter-spacing: -0.025em; }
.pc { display: flex; align-items: center; padding: 3px 0 0 42px; line-height: 20px; height: 34px; font-size: 13px; color: #555; }
.pc span { margin: 0 10px; width: 135px; white-space: nowrap; }
dl { display: grid; grid-template-columns: 107px 1fr; grid-auto-rows: 24px; padding: 0 0 0 41px; margin-top: 2px; font-size: 13px; line-height: 24px; color: #222; }
dt { color: #888; letter-spacing: -0.055em; }
.log { color: #2a7fb4; font-size: 13px; line-height: 20px; margin: 12px 0 0 41px; letter-spacing: -0.02em; }
.qh { margin-top: auto; height: 151px; background: #f5f5f5; border-top: 1px solid #e0e0e0; padding: 9px 20px 0 10px; font-size: 13px; }
.qt { display: flex; align-items: center; gap: 5px; line-height: 22px; }
.qt span { flex: 1; font-size: 14px; }
.qh p { margin-top: 19px; line-height: 17.800px; white-space: nowrap; letter-spacing: -0.048em; }
.qh a { color: #2a7fb4; }

/* command bar */
.cmd { height: 60px; background: #3e4550; color: #fff; display: flex; padding-left: 28px; align-items: center; }
.cmd strong { font-weight: 600; margin-left: 7px; width: 34px; letter-spacing: -0.06em; }
.acts { display: flex; margin-left: 559px; height: 60px; }
.acts div { width: 85px; padding-top: 10px; text-align: center; font-size: 10.500px; line-height: 9px; white-space: nowrap; letter-spacing: -0.06em; }
.acts svg { width: 22px; height: 22px; margin: 0 auto 3px; }
.dim { opacity: .5; }

/* desktop taskbar */
.task { height: 40px; background: #000; display: flex; color: #fff; }
.apps { display: flex; }
.apps > * { width: 49px; height: 40px; }
.run { background: linear-gradient(#76b9ed, #76b9ed) 50% 100% / 40px 2px no-repeat; }
.run.cur { background: linear-gradient(#76b9ed, #76b9ed) 50% 100% / 48px 2px no-repeat, #333; }
.fs, .apps .off { display: flex; align-items: center; justify-content: center; }
.fs b { background: #a8326e; width: 24px; height: 24px; border-radius: 4px; line-height: 24px; text-align: center; font-weight: 600; }
.apps .off b { font-size: 12px; line-height: 22px; width: 23px; height: 22px; padding-left: 2px; }
.ppt b { background: linear-gradient(90deg, #d04423 14px, #fff 14px 21px, #d04423 21px); }
.wrd b { background: linear-gradient(90deg, #2a5699 14px, #fff 14px 21px, #2a5699 21px); }
.xls b { background: linear-gradient(90deg, #1f7244 14px, #fff 14px 21px, #1f7244 21px); }
.olk b { background: linear-gradient(90deg, #0a6cce 14px, #fff 14px 21px, #0a6cce 21px); }
.tray { display: flex; align-items: center; margin-left: 137px; font-size: 12px; white-space: nowrap; }
.desk { width: 48px; }
.more { width: 17px; font-size: 16px; margin-top: -20px; }
.lang { width: 38px; margin-left: 1px; }
.clock { width: 52px; text-align: center; line-height: 18.500px; font-size: 12px; margin-right: 26px; }

/* result dialog */
.modal .acts > div { opacity: .5; }
.shade { position: absolute; left: 60px; right: 0; top: 48px; height: 866px; background: rgba(0, 0, 0, .4); }
.dialog { position: absolute; left: 152px; top: 91px; width: 1659px; height: 780px; background: #fff; overflow: hidden; color: #444; }
.crumb { display: flex; align-items: center; height: 46px; padding: 0 16px 0 11px; font-size: 18px; line-height: 26px; font-weight: 300; gap: 9px; color: #333; }
.x { width: 8px; height: 8px; margin: -6px 0 0 auto; background: linear-gradient(45deg, transparent 40%, #555 40% 60%, transparent 60%), linear-gradient(-45deg, transparent 40%, #555 40% 60%, transparent 60%); }
.dims { display: flex; padding: 3px 0 0 30px; height: 64px; font-size: 16px; line-height: 22px; }
.dims div { width: 64px; }
.dims b { display: block; font-weight: 400; color: #3f9fc9; font-size: 15px; }
.split { display: flex; height: 670px; }
.gridwrap { width: 1189px; display: flex; height: 668px; }
.viewas { width: 92px; padding: 60px 0 0 32px; font-size: 13px; line-height: 18px; }
.viewas svg { margin-top: 3px; overflow: visible; }
.table { width: 1054px; overflow: hidden; }
.tr { display: grid; grid-template-columns: 74px 71px 153px 71px 71px 71px 119px 80px 92.500px 82.500px 71px 1fr; padding: 2px 0 2px 11px; font-size: 15.500px; line-height: 20px; font-weight: 300; align-items: center; color: #222; white-space: nowrap; }
.tr.head { height: 51px; padding-top: 0; font-size: 13.500px; line-height: 18px; font-weight: 400; color: #555; border-bottom: 1px solid #72b2d4; }
.tr.hist { height: 61px; padding-top: 0; padding-bottom: 10px; align-items: end; }
.gridwrap .vbar { margin-left: 16px; }
.gridwrap .vbar u { height: 91px; }
.stats { flex: 1; height: 669px; border-left: 3px solid #c4c4c4; margin-right: 2px; padding-left: 10px; }
.ex { color: #999; margin: 1px 0 0 16px; }
h3 { font-size: 18px; line-height: 34px; height: 41px; border-bottom: 1px solid #3f9fc9; color: #3f9fc9; display: flex; align-items: center; gap: 9px; padding-left: 16px; }
.stats h3 { font-weight: 400; letter-spacing: -0.04em; }
h3 + h3 { margin-top: 19px; height: 40px; }
.ghost { margin: 28px 0 0 164px; }
.stats p { text-align: center; width: 181px; margin-left: 128px; font-size: 13px; font-weight: 600; line-height: 16.500px; color: #b5b5b5; white-space: nowrap; letter-spacing: -0.045em; }
```
FILE: main.js
```js
const $ = id => document.getElementById(id);

// Two desktops side by side; the second one has the result dialog open.
for (const wide of [false, true]) {
  const frame = document.createElement('div');
  frame.className = wide ? 'frame wide modal' : 'frame';
  frame.append($('screen').content.cloneNode(true));
  if (wide) frame.querySelector('.app').append($('dialog').content.cloneNode(true));
  $('pair').append(frame);
}

const columns = ['Survived', 'Pclass', 'Name', 'Sex', 'Age', 'SibSp', 'Ticket', 'Fare', 'Cabin', 'Embarked', 'Scored<br>Labels', 'Scored<br>Probabilities'];
const rows = [
  [1, 1, 'Bucknell, Mrs.<br>William Robert<br>(Emma Eliza Ward)', 'female', 60, 0, '11813', '76.2917', 'D15', 'C', 1, '0.996602'],
  [1, 3, 'Masselmani, Mrs.<br>Fatima', 'female', 28, 0, '2649', '7.225', '', 'C', '', ''],
  [1, 3, "O'Donoghue, Ms.<br>Bridget", 'female', 28, 0, '364856', '7.75', '', 'Q', '', ''],
  [0, 3, 'Thomas, Mr.<br>Tannous', 'male', 28, 0, '2684', '7.225', '', 'C', '', ''],
  [1, 1, 'Dick, Mrs. Albert<br>Adrian (Vera<br>Gillespie)', 'female', 17, 1, '17474', '57', 'B20', 'S', 1, '0.999841'],
  [0, 3, 'van Melkebeke, Mr.<br>Philemon', 'male', 28, 0, '345777', '9.5', '', 'S', '', ''],
  [0, 1, 'Colley, Mr. Edward<br>Pomeroy', 'male', 47, 0, '5727', '25.5875', 'E58', 'S', 0, '0.029077'],
  [1, 1, 'Potter, Mrs. Thomas<br>Jr (Lily Alexenia<br>Wilson)', 'female', 56, 0, '11767', '83.1583', 'C50', 'C', 1, '0.999263'],
  [0, 1, 'Ovies y Rodriguez,<br>Mr. Servando', 'male', '28.5', 0, 'PC 17562', '27.7208', 'D43', 'C', 0, '0.229537'],
  [1, 2, 'Richards, Master.<br>George Sibley', 'male', '0.83', 1, '29106', '18.75', '', 'S', '', ''],
  [1, 1, 'Goldenberg, Mrs.<br>Samuel L (Edwiga<br>Grabowska)', 'female', 28, 1, '17453', '89.1042', 'C92', 'C', 1, '0.992721']
];

// Histogram bars per column: [x, width, height]
const run = (x, heights) => heights.map((h, i) => [x + i * 4, 3, h]);
const bars = [
  [[1, 3, 30], [40, 3, 19]],
  [[7, 8, 30], [18, 8, 14], [29, 8, 11]],
  [[2, 3, 30], ...run(6, Array(9).fill(15))],
  [[10, 10, 30], [24, 11, 17]],
  [[2, 3, 30], ...run(6, [8, 8, 7, 7, 6, 6, 5, 5, 5])],
  [[4, 5, 30], [10, 4, 11], [17, 4, 2], [22, 4, 1], [27, 4, 1]],
  run(2, Array(10).fill(30)),
  run(2, [30, 26, 24, 22, 16, 16, 14, 13, 10, 10]),
  [[2, 3, 30], [6, 36, .5]],
  [[7, 8, 30], [18, 8, 10], [29, 8, 4]],
  [[1, 4, 30], [40, 4, 28]],
  [[1, 4, 10], [5, 4, 11], [10, 3, 10], [14, 4, 2], [23, 4, 1], [40, 3, 30]]
];

const row = (cells, cls = '') => `<div class="tr ${cls}">${cells.map(c => `<div>${c}</div>`).join('')}</div>`;
const chart = list => `<svg width="45" height="30" fill="#72b2d4">${list.map(([x, w, h]) => `<rect x="${x}" y="${30 - h}" width="${w}" height="${h}"/>`).join('')}</svg>`;
$('table').innerHTML =
  row(columns, 'head') + row(bars.map(chart), 'hist') + rows.map(r => row(r)).join('');
```
